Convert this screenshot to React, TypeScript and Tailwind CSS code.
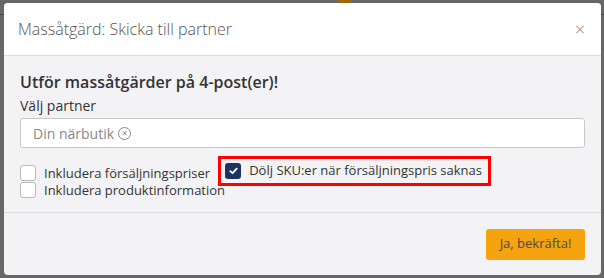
import React from "react";

export default function App() {
  return (
    <div className="relative h-[278px] w-[604px] overflow-hidden bg-[#676767] pt-[3px] pl-[4px]" style={{ fontFamily: '"Open Sans", sans-serif' }}>
      <div className="absolute left-[338px] top-[-6px] h-[10px] w-[14px] rounded-full bg-[#a0660a]" />
      <div className="absolute left-0 top-[14px] h-[1px] w-[4px] bg-[#2f4f4f]" />
      <div className="absolute right-0 top-[14px] h-[1px] w-[3px] bg-[#2f4f4f]" />
      <div className="relative flex h-[272px] w-[597px] flex-col overflow-hidden rounded-[4px] bg-[#f3f3f5]">
        <div className="flex h-[53px] items-center justify-between border-b border-[#dcdcdf] bg-white pl-[14px] pr-[16px]">
          <span className="text-[16px] font-light text-[#555]">Massåtgärd: Skicka till partner</span>
          <span className="text-[18px] font-light leading-none text-[#888]">×</span>
        </div>
        <div className="flex flex-1 flex-col border-b border-[#dcdcdf] px-[16px] pt-[14px]">
          <div className="text-[16px] font-semibold text-[#333]">Utför massåtgärder på 4-post(er)!</div>
          <div className="mt-[1px] text-[14px] text-[#333]">Välj partner</div>
          <div className="mt-[2px] flex h-[30px] w-[565px] items-center rounded-[3px] border border-[#c8c8cc] bg-white px-[12px]">
            <span className="text-[14px] text-[#888]">Din närbutik</span>
            <span className="ml-[4px] flex h-[13px] w-[13px] items-center justify-center rounded-full border border-[#888] text-[10px] leading-none text-[#888]">×</span>
          </div>
          <div className="mt-[8px] flex h-[30px] items-center">
            <label className="flex h-[16px] items-center pt-[3px]">
              <span className="h-[16px] w-[16px] rounded-[3px] border border-[#b9b9be] bg-white" />
              <span className="ml-[8px] text-[13px] leading-[16px] text-[#333]">Inkludera försäljningspriser</span>
            </label>
            <div className="ml-[8px] flex h-[30px] items-center border-[3px] border-[#ff0000] pl-[4px] pr-[6px]">
              <span className="flex h-[16px] w-[16px] items-center justify-center rounded-[3px] bg-[#1d3461]">
                <svg width="9" height="8" viewBox="0 0 9 8">
                  <path d="M1.3 4.2 L3.5 6.2 L7.7 1.6" fill="none" stroke="white" strokeWidth="1.8" strokeLinecap="round" strokeLinejoin="round" />
                </svg>
              </span>
              <span className="ml-[8px] text-[13px] text-[#333]">Dölj SKU:er när försäljningspris saknas</span>
            </div>
          </div>
          <label className="mt-[-4px] flex h-[16px] items-center">
            <span className="h-[16px] w-[16px] rounded-[3px] border border-[#b9b9be] bg-white" />
            <span className="ml-[8px] text-[13px] leading-[16px] text-[#333]">Inkludera produktinformation</span>
          </label>
        </div>
        <div className="flex h-[62px] items-center justify-end pr-[16px]">
          <button className="h-[31px] w-[99px] rounded-[3px] bg-[#f5a30f] text-[13px] text-[#4a4a4a]">Ja, bekräfta!</button>
        </div>
      </div>
    </div>
  );
}
